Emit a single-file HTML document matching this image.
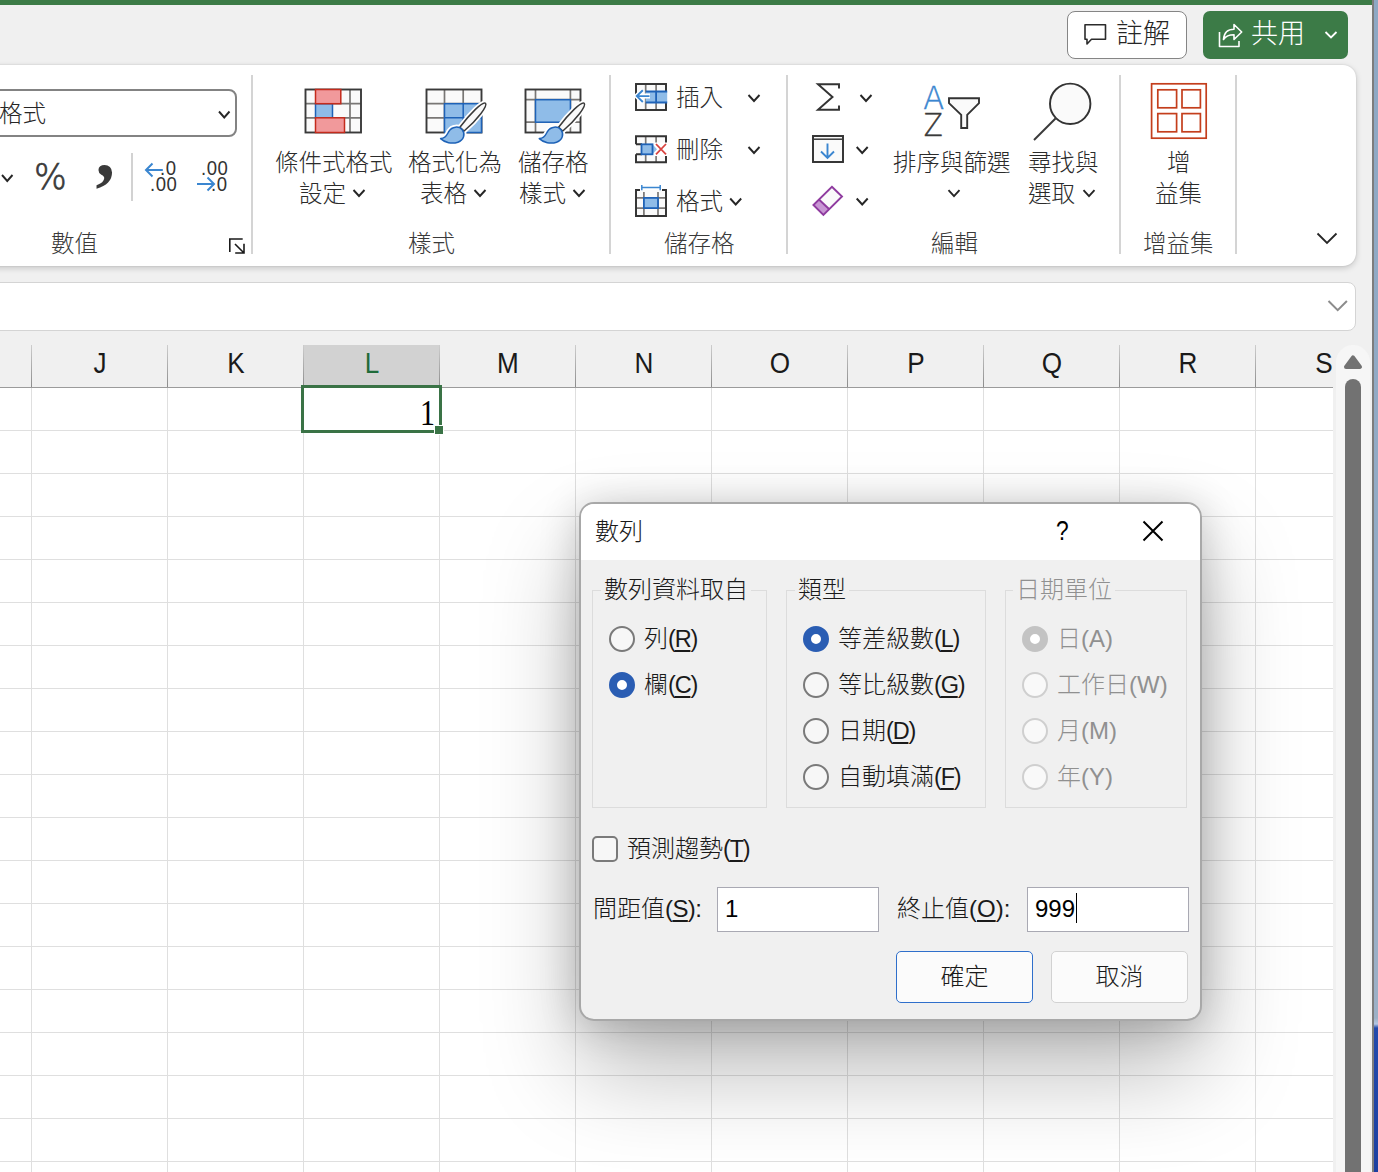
<!DOCTYPE html>
<html lang="zh-Hant">
<head>
<meta charset="utf-8">
<title>Excel</title>
<style>
*{box-sizing:border-box;margin:0;padding:0}
html,body{width:1378px;height:1172px;overflow:hidden;background:#f0f0f0}
body{position:relative;font-family:"Liberation Sans","Noto Sans CJK TC",sans-serif;color:#262626;font-size:24px;font-weight:300}
.abs{position:absolute}
.t{position:absolute;white-space:nowrap;line-height:1}
#greenbar{left:0;top:0;width:1373px;height:5px;background:#3c7b47}
#desk{left:1374px;top:0;width:4px;height:1172px;background:linear-gradient(to bottom,#8ea8c4 0,#93abc5 600px,#9cb0c6 1018px,#b4c6e2 1024px,#2249ab 1028px,#1c3fa0 1172px)}
#edge{left:1372px;top:0;width:2px;height:1172px;background:#7d7d7d}
#ribbon{left:-20px;top:65px;width:1376px;height:201px;background:#fff;border-radius:0 13px 13px 0;box-shadow:0 2px 6px rgba(0,0,0,.18),0 0 2px rgba(0,0,0,.12)}
.sep{position:absolute;top:75px;width:2px;height:179px;background:#d4d4d4}
#fbar{left:-20px;top:282px;width:1376px;height:49px;background:#fff;border:1px solid #d4d4d4;border-radius:0 8px 8px 0}
/* grid */
#grid{left:0;top:388px;width:1333px;height:784px;background:#fff}
#hl{left:0;top:388px;width:1333px;height:784px;background-image:repeating-linear-gradient(to bottom,transparent 0,transparent 42px,#dfdfdf 42px,#dfdfdf 43px)}
#vl{left:31px;top:388px;width:1302px;height:784px;background-image:repeating-linear-gradient(to right,#dfdfdf 0,#dfdfdf 1px,transparent 1px,transparent 136px)}
#hdrline{left:0;top:387px;width:1333px;height:1px;background:#9b9b9b}
.hs{position:absolute;top:345px;width:1px;height:42px;background:linear-gradient(to bottom,#cdcdcd,#8c8c8c)}
.hc{position:absolute;top:348.500px;width:136px;margin-left:1px;text-align:center;font-size:29px;line-height:28px;transform:scaleX(.9);color:#1a1a1a;font-weight:400}

/* top buttons */
#cmt{left:1067px;top:11px;width:120px;height:48px;background:#fff;border:1.500px solid #858585;border-radius:8px}
#shr{left:1203px;top:11px;width:145px;height:48px;background:#3c7b47;border-radius:7px}
.bt{font-size:27px;font-weight:300}
.gl{font-size:23.500px;color:#3a3a3a}
.rl{font-size:23.5px;color:#2b2b2b;text-align:center}
.chev{position:absolute}
/* number format select */
#nf{left:-20px;top:89px;width:257px;height:48px;border:2px solid #838383;border-radius:8px;background:#fff}

#selhdr{left:303px;top:345px;width:137px;height:41px;background:#d2d2d2}
#selcell{left:301px;top:385px;width:141px;height:48px;border:3px solid #3a7346;background:#fff}
#fillh{left:434px;top:425px;width:10px;height:10px;background:#3a7346;border:1px solid #fff}
#sbtrack{left:1336px;top:345px;width:34px;height:840px;background:#f6f6f6;border-radius:17px 17px 0 0}
#sbthumb{left:1345px;top:379px;width:16px;height:820px;background:#727272;border-radius:8px}

.ic{position:absolute;left:0;top:0;overflow:visible}
.sm{position:absolute;font-size:19.500px;line-height:1;color:#333;white-space:nowrap;transform-origin:0 0;transform:scaleX(.95);font-weight:400;letter-spacing:.6px}

/* dialog */
#dlg{left:579px;top:502px;width:623px;height:519px;background:#f0f0f0;border:2px solid #a8a8a8;border-radius:15px;box-shadow:0 50px 96px rgba(0,0,0,.27),0 4px 40px rgba(0,0,0,.2);overflow:hidden}
#dlgtitle{left:0;top:0;width:100%;height:56px;background:#fff}
.gb{position:absolute;border:1px solid #dcdcdc}
.gt{position:absolute;white-space:nowrap;line-height:1;font-size:24px;color:#1a1a1a;background:#f0f0f0;padding:0 3px}
.dl{position:absolute;white-space:nowrap;line-height:1;font-size:24px;color:#1a1a1a}
.dl u{text-decoration-thickness:1.500px;text-underline-offset:3px}
.dl i{font-style:normal;letter-spacing:-1.200px;font-size:23.500px}
.dis{color:#909090}
.dl.dis i{letter-spacing:0;font-size:24px}
.rad{position:absolute;width:26px;height:26px;border-radius:50%;border:2px solid #7a7a7a;background:#f7f7f7}
.rad.on{border:8px solid #2a5db3;background:#fff}
.rad.d{border-color:#cfcfcf;background:#f9f9f9}
.rad.d.on{border:8px solid #c3c3c3;background:#fff}
.inp{position:absolute;top:887px;width:162px;height:45px;background:#fff;border:1px solid #a9a9b3}
.btn{position:absolute;top:951px;width:137px;height:52px;background:#fbfbfb;border:1px solid #d2d2d2;border-radius:5px;text-align:center;font-size:24px;line-height:50px;color:#1a1a1a}
</style>
</head>
<body>
<div id="greenbar" class="abs"></div>
<div id="ribbon" class="abs"></div>

<!-- top right buttons -->
<div id="cmt" class="abs"></div>
<svg class="abs" style="left:1082px;top:21px" width="28" height="28" viewBox="0 0 28 28" fill="none" stroke="#2b2b2b" stroke-width="1.600" stroke-linejoin="round"><path d="M3 3.800h20.500v14.500h-14l-4.500 4.700v-4.700h-2z"/></svg>
<div class="t bt" style="left:1116px;top:20.500px;color:#262626">註解</div>
<div id="shr" class="abs"></div>
<svg class="abs" style="left:1217px;top:21px" width="30" height="28" viewBox="0 0 30 28" fill="none" stroke="#fff" stroke-width="1.6" stroke-linejoin="round" stroke-linecap="butt"><path d="M2.5 11v14.5h19.5V20"/><path d="M6.500 18.500c.5-6.500 4.500-10.200 10.500-10.200V3.500l7.700 7.500-7.700 7.500v-4.700c-4.500 0-8 1-10.500 4.700z"/></svg>
<div class="t bt" style="left:1251px;top:21px;color:#fff">共用</div>
<svg class="abs" style="left:1324px;top:30px" width="14" height="10" viewBox="0 0 14 10" fill="none" stroke="#fff" stroke-width="1.8"><path d="M1.500 2l5.500 5.500L12.500 2"/></svg>

<!-- separators -->
<div class="sep" style="left:251px"></div>
<div class="sep" style="left:609px"></div>
<div class="sep" style="left:786px"></div>
<div class="sep" style="left:1119px"></div>
<div class="sep" style="left:1235px"></div>

<!-- group labels -->
<div class="t gl" style="left:51px;top:233px">數值</div>
<div class="t gl" style="left:408px;top:233px">樣式</div>
<div class="t gl" style="left:664px;top:233px">儲存格</div>
<div class="t gl" style="left:931px;top:233px">編輯</div>
<div class="t gl" style="left:1143px;top:233px">增益集</div>

<!-- NUMBER GROUP -->
<div id="nf" class="abs"></div>
<div class="t" style="left:-1px;top:103px;font-size:23.500px;color:#262626">格式</div>
<div class="t" style="left:33.500px;top:159px;font-family:'DejaVu Sans','Liberation Sans',sans-serif;font-size:35.500px;color:#3a3a3a;font-weight:200;-webkit-text-stroke:.7px #3a3a3a;transform-origin:0 0;transform:scaleX(.97)">%</div>
<div class="t" style="left:95.500px;top:112.300px;font-family:'Liberation Serif',serif;font-weight:700;font-size:78px;color:#3a3a3a">,</div>
<div class="abs" style="left:131px;top:153px;width:2px;height:48px;background:#d2d2d2"></div>
<div class="sm" style="left:159.600px;top:158.500px">.0</div>
<div class="sm" style="left:149.500px;top:175px">.00</div>
<div class="sm" style="left:201.400px;top:158.500px">.00</div>
<div class="sm" style="left:211.300px;top:175px">.0</div>
<div class="t rl" style="left:275px;top:151.500px;width:117px">條件式格式</div>
<div class="t rl" style="left:299px;top:182.500px">設定</div>
<div class="t rl" style="left:408px;top:151.500px">格式化為</div>
<div class="t rl" style="left:420px;top:182.500px">表格</div>
<div class="t rl" style="left:518px;top:151.500px">儲存格</div>
<div class="t rl" style="left:519px;top:182.500px">樣式</div>
<div class="t rl" style="left:676px;top:86.500px">插入</div>
<div class="t rl" style="left:676px;top:138.500px">刪除</div>
<div class="t rl" style="left:676px;top:190.500px">格式</div>
<div class="t rl" style="left:893px;top:151.500px">排序與篩選</div>
<div class="t rl" style="left:1028px;top:151.500px">尋找與</div>
<div class="t rl" style="left:1028px;top:182.500px">選取</div>
<div class="t rl" style="left:1167px;top:151.500px">增</div>
<div class="t rl" style="left:1155px;top:182.500px">益集</div>
<svg class="ic" width="1378" height="280" viewBox="0 0 1378 280">
<path d="M219 111.5l5.25 6.0l5.25 -6.0" fill="none" stroke="#262626" stroke-width="1.9"/><path d="M2 175l5.25 6.0l5.25 -6.0" fill="none" stroke="#262626" stroke-width="1.9"/><path d="M353.5 190l5.5 6.0l5.5 -6.0" fill="none" stroke="#262626" stroke-width="1.9"/><path d="M474.5 190l5.5 6.0l5.5 -6.0" fill="none" stroke="#262626" stroke-width="1.9"/><path d="M573.5 190l5.5 6.0l5.5 -6.0" fill="none" stroke="#262626" stroke-width="1.9"/><path d="M748.5 95l5.5 6.0l5.5 -6.0" fill="none" stroke="#262626" stroke-width="1.9"/><path d="M748.5 147l5.5 6.0l5.5 -6.0" fill="none" stroke="#262626" stroke-width="1.9"/><path d="M730.2 198.5l5.5 6.0l5.5 -6.0" fill="none" stroke="#262626" stroke-width="1.9"/><path d="M860.5 95l5.5 6.0l5.5 -6.0" fill="none" stroke="#262626" stroke-width="1.9"/><path d="M856.7 147l5.5 6.0l5.5 -6.0" fill="none" stroke="#262626" stroke-width="1.9"/><path d="M856.7 198.5l5.5 6.0l5.5 -6.0" fill="none" stroke="#262626" stroke-width="1.9"/><path d="M948.5 190.2l5.5 6.0l5.5 -6.0" fill="none" stroke="#262626" stroke-width="1.9"/><path d="M1083.5 190.2l5.5 6.0l5.5 -6.0" fill="none" stroke="#262626" stroke-width="1.9"/><path d="M1317.500 233.500l9.500 9.500l9.500 -9.500" fill="none" stroke="#262626" stroke-width="1.8"/><g fill="none" stroke="#3b86d0" stroke-width="2"><path d="M162.800 170H146.500M152.500 163.500L146 170l6.500 6.500"/><path d="M197 184H213.500M207.500 177.500L214 184l-6.500 6.500"/></g><g fill="none" stroke="#1a1a1a" stroke-width="1.6"><path d="M229.800 252V239H242.700"/><path d="M235 244l9 9M244 243.800V253H235.200"/></g>
</svg>
<svg class="ic" width="1378" height="280" viewBox="0 0 1378 280">
<g>
<rect x="305.500" y="89.500" width="55.500" height="43" fill="#fafafa"/>
<path d="M350 89.500V132.500M305.500 103.700H361M305.500 117.800H361" stroke="#797775" stroke-width="1.700" fill="none"/>
<rect x="305.500" y="89.500" width="55.500" height="43" fill="none" stroke="#3a3a3a" stroke-width="1.900"/>
<rect x="315.500" y="103.700" width="17" height="14.100" fill="#8fbce8" stroke="#1e62b7" stroke-width="1.500"/>
<rect x="315.500" y="89.500" width="25.300" height="14.200" fill="#f1999b" stroke="#c42b1c" stroke-width="1.500"/>
<rect x="315.500" y="117.800" width="29" height="14.700" fill="#f1999b" stroke="#c42b1c" stroke-width="1.500"/>
</g>
<g>
<rect x="426.500" y="89.500" width="55" height="43" fill="#fafafa"/>
<path d="M444.500 89.500V132.500M463.200 89.500V132.500M426.500 103.700H481.500M426.500 117.800H481.500" stroke="#797775" stroke-width="1.700" fill="none"/>
<rect x="426.500" y="89.500" width="55" height="43" fill="none" stroke="#3a3a3a" stroke-width="1.900"/>
<rect x="444.500" y="103.700" width="37" height="28.800" fill="#8fbce8" stroke="#1e62b7" stroke-width="1.500"/>
<path d="M463.200 103.700V132.500M444.500 117.800H481.500" stroke="#1e62b7" stroke-width="1.500" fill="none"/>
<g transform="translate(0.30000000000001137 0.0)">
<path d="M485.200 103.300C487.500 105.800 477.500 119.500 463.800 131L459.600 127.200C469.500 114 482.600 100.800 485.200 103.300Z" fill="none" stroke="#fff" stroke-width="5" stroke-linejoin="round"/>
<path d="M440.300 138.600C445.500 138.800 446.800 134.500 448.600 131.300C451.600 126.200 458.800 125.800 462 129.800C465.200 134 463.600 140.200 457.600 142.200C451.500 144.200 444.500 142.600 440.300 138.600Z" fill="none" stroke="#fff" stroke-width="5" stroke-linejoin="round"/>
<path d="M485.200 103.300C487.500 105.800 477.500 119.500 463.800 131L459.600 127.200C469.500 114 482.600 100.800 485.200 103.300Z" fill="#fafafa" stroke="#3a3a3a" stroke-width="1.500" stroke-linejoin="round"/>
<path d="M440.300 138.600C445.500 138.800 446.800 134.500 448.600 131.300C451.600 126.200 458.800 125.800 462 129.800C465.200 134 463.600 140.200 457.600 142.200C451.500 144.200 444.500 142.600 440.300 138.600Z" fill="#8fbce8" stroke="#1e62b7" stroke-width="1.500" stroke-linejoin="round"/>
</g>
</g>
<g>
<rect x="525.500" y="89.500" width="55" height="43" fill="#fafafa"/>
<path d="M535.500 89.500V132.500M570.400 89.500V132.500M525.500 99.700H580.500M525.500 122.200H580.500" stroke="#797775" stroke-width="1.700" fill="none"/>
<rect x="525.500" y="89.500" width="55" height="43" fill="none" stroke="#3a3a3a" stroke-width="1.900"/>
<rect x="535.500" y="99.700" width="34.900" height="22.500" fill="#8fbce8" stroke="#1e62b7" stroke-width="1.500"/>
<g transform="translate(99 0.0)">
<path d="M485.200 103.300C487.500 105.800 477.500 119.500 463.800 131L459.600 127.200C469.500 114 482.600 100.800 485.200 103.300Z" fill="none" stroke="#fff" stroke-width="5" stroke-linejoin="round"/>
<path d="M440.300 138.600C445.500 138.800 446.800 134.500 448.600 131.300C451.600 126.200 458.800 125.800 462 129.800C465.200 134 463.600 140.200 457.600 142.200C451.500 144.200 444.500 142.600 440.300 138.600Z" fill="none" stroke="#fff" stroke-width="5" stroke-linejoin="round"/>
<path d="M485.200 103.300C487.500 105.800 477.500 119.500 463.800 131L459.600 127.200C469.500 114 482.600 100.800 485.200 103.300Z" fill="#fafafa" stroke="#3a3a3a" stroke-width="1.500" stroke-linejoin="round"/>
<path d="M440.300 138.600C445.500 138.800 446.800 134.500 448.600 131.300C451.600 126.200 458.800 125.800 462 129.800C465.200 134 463.600 140.200 457.600 142.200C451.500 144.200 444.500 142.600 440.300 138.600Z" fill="#8fbce8" stroke="#1e62b7" stroke-width="1.500" stroke-linejoin="round"/>
</g>
</g>
<g>
<rect x="636" y="84" width="30" height="26" fill="#fafafa"/>
<path d="M645.700 84V110M656.100 84V110" stroke="#797775" stroke-width="1.700" fill="none"/>
<rect x="636" y="84" width="30" height="26" fill="none" stroke="#333" stroke-width="1.950"/>
<rect x="645.700" y="91.500" width="21.500" height="11" fill="#8fbce8"/>
<path d="M645.700 91.500H667.200M645.700 102.500H667.200M656.100 91.500V102.500" stroke="#1e62b7" stroke-width="1.800" fill="none"/>
<path d="M650 96.100H637.500M642.800 90.200L636.800 96.100l6 5.900" stroke="#fff" stroke-width="5" fill="none"/>
<path d="M649.500 96.100H637.200M642.800 90.200L636.800 96.100l6 5.900" stroke="#3b86d0" stroke-width="1.900" fill="none"/>
</g>
<g>
<rect x="636" y="136.200" width="30" height="26" fill="#fafafa"/>
<path d="M645.700 136.200V162.200M656.100 136.200V162.200" stroke="#797775" stroke-width="1.700" fill="none"/>
<path d="M636 144.300V136.200H666V144M666 154.400V162.200H636V154.300M636 144.300H642M636 154.300H642" fill="none" stroke="#333" stroke-width="1.950"/>
<rect x="652" y="142.500" width="16" height="13.500" fill="#fff"/>
<path d="M652.500 144.300L657 149.300L652.500 154.300Z" fill="#8fbce8"/>
<rect x="641.500" y="144.300" width="11" height="10" fill="#8fbce8" stroke="#1e62b7" stroke-width="1.800"/>
<path d="M656 144L666 154.400M666 144L656 154.400" stroke="#d9433f" stroke-width="1.800" fill="none"/>
</g>
<g>
<rect x="636" y="190" width="30" height="26" fill="#fafafa"/>
<path d="M643.900 192V216M658 192V216M636 197.900H666M636 208.100H666" stroke="#797775" stroke-width="1.700" fill="none"/>
<path d="M640 190H636V216H666V190H662" fill="none" stroke="#333" stroke-width="1.950"/>
<rect x="643.900" y="197.900" width="14.100" height="10.200" fill="#8fbce8" stroke="#1e62b7" stroke-width="1.800"/>
<path d="M641.800 185V190.200M660.200 185V190.200M641.800 187.600H660.200" stroke="#3b86d0" stroke-width="1.500" fill="none"/>
</g>
<path d="M839 88.500V84.200H818L832.500 97L818 109.800H839V105.500" fill="none" stroke="#333" stroke-width="1.950"/>
<g>
<rect x="813" y="136" width="30" height="26" fill="#fafafa" stroke="#333" stroke-width="1.950"/>
<path d="M813 139.200H843" stroke="#3a3a3a" stroke-width="1.500"/>
<path d="M827.500 143.500V157.500M821 151.500L827.500 158l6.500 -6.500" fill="none" stroke="#3b86d0" stroke-width="1.900"/>
</g>
<g stroke-linejoin="miter">
<path d="M831.900 186.800L842 196.500L823.400 215L813.400 205Z" fill="#fafafa"/>
<path d="M818.700 199.200L829.300 209.200L823.400 215L813.400 205Z" fill="#c896d4"/>
<path d="M831.900 186.800L842 196.500L823.400 215L813.400 205Z" fill="none" stroke="#8f3b9f" stroke-width="1.900"/>
<path d="M818.700 199.200L829.300 209.200" stroke="#8f3b9f" stroke-width="1.900"/>
</g>
<text x="923.300" y="109" font-family="DejaVu Sans, Liberation Sans, sans-serif" font-weight="200" font-size="31.600" fill="#3b86d0" stroke="#3b86d0" stroke-width=".5" textLength="21" lengthAdjust="spacingAndGlyphs">A</text>
<text x="923.800" y="136.400" font-family="DejaVu Sans, Liberation Sans, sans-serif" font-weight="200" font-size="31.600" fill="#3a3a3a" stroke="#3a3a3a" stroke-width=".5" textLength="19" lengthAdjust="spacingAndGlyphs">Z</text>
<path d="M949 98.200H979V103.200L967.200 114.800V128H961.200V114.800L949 103.200Z" fill="#fafafa" stroke="#333" stroke-width="1.900" stroke-linejoin="miter"/>
<circle cx="1070.200" cy="103.800" r="20.200" fill="#fafafa" stroke="#333" stroke-width="1.950"/>
<path d="M1055.500 118.500L1034 140" stroke="#3a3a3a" stroke-width="1.900" fill="none"/>
<g fill="none" stroke="#c43e1c" stroke-width="1.700">
<rect x="1151.600" y="83.800" width="54.600" height="54.400"/>
<rect x="1157.800" y="89.800" width="18.800" height="18"/>
<rect x="1182" y="89.800" width="18.400" height="18"/>
<rect x="1157.800" y="113.600" width="18.800" height="18.200"/>
<rect x="1182" y="113.600" width="18.400" height="18.200"/>
</g>
</svg>
<div id="fbar" class="abs"></div>
<svg class="abs" style="left:1326px;top:298px" width="24" height="16" viewBox="0 0 24 16"><path d="M2.500 3l9.200 9.200L20.900 3" fill="none" stroke="#8c8c8c" stroke-width="2"/></svg>
<div id="grid" class="abs"></div>
<div id="hl" class="abs"></div>
<div id="vl" class="abs"></div>
<div id="hdrline" class="abs"></div>
<!-- headers -->
<div id="selhdr" class="abs"></div>
<div class="hs" style="left:31px"></div><div class="hc" style="left:31px">J</div>
<div class="hs" style="left:167px"></div><div class="hc" style="left:167px">K</div>
<div class="hs" style="left:303px"></div><div class="hc" style="left:303px;color:#1f6b3a">L</div>
<div class="hs" style="left:439px"></div><div class="hc" style="left:439px">M</div>
<div class="hs" style="left:575px"></div><div class="hc" style="left:575px">N</div>
<div class="hs" style="left:711px"></div><div class="hc" style="left:711px">O</div>
<div class="hs" style="left:847px"></div><div class="hc" style="left:847px">P</div>
<div class="hs" style="left:983px"></div><div class="hc" style="left:983px">Q</div>
<div class="hs" style="left:1119px"></div><div class="hc" style="left:1119px">R</div>
<div class="hs" style="left:1255px"></div><div class="hc" style="left:1255px">S</div>
<div id="selcell" class="abs"></div>
<div class="t" style="left:380.800px;top:396.800px;width:54px;text-align:right;font-family:'Liberation Serif','Noto Serif CJK SC',serif;font-size:36.500px;font-weight:400;color:#000;line-height:32px;transform:scaleX(.82);transform-origin:100% 50%">1</div>
<div id="fillh" class="abs"></div>
<div id="sbtrack" class="abs"></div>
<svg class="abs" style="left:1343px;top:354px" width="20" height="16" viewBox="0 0 20 16"><path d="M10 3.300L17 13H3z" fill="#727272" stroke="#727272" stroke-width="4" stroke-linejoin="round"/></svg>
<div id="sbthumb" class="abs"></div>

<!-- DIALOG -->
<div id="dlg" class="abs"><div id="dlgtitle" class="abs"></div></div>
<div class="dl" style="left:595px;top:520px">數列</div>
<div class="dl" style="left:1055.500px;top:516px;font-size:28.500px;font-weight:400;color:#000;transform:scaleX(.8);transform-origin:0 0">?</div>
<svg class="abs" style="left:1141px;top:519px" width="24" height="24" viewBox="0 0 24 24"><path d="M2.500 2.500L21.500 21.500M21.500 2.500L2.500 21.500" stroke="#000" stroke-width="2" fill="none"/></svg>

<div class="gb" style="left:592px;top:590px;width:175px;height:218px"></div>
<div class="gb" style="left:786px;top:590px;width:200px;height:218px"></div>
<div class="gb" style="left:1005px;top:590px;width:182px;height:218px"></div>
<div class="gt" style="left:601px;top:578px">數列資料取自</div>
<div class="gt" style="left:795px;top:578px">類型</div>
<div class="gt dis" style="left:1013px;top:578px">日期單位</div>

<div class="rad" style="left:609px;top:626px"></div>
<div class="rad on" style="left:609px;top:672px"></div>
<div class="dl" style="left:644px;top:627px">列<i>(<u>R</u>)</i></div>
<div class="dl" style="left:644px;top:673px">欄<i>(<u>C</u>)</i></div>

<div class="rad on" style="left:803px;top:626px"></div>
<div class="rad" style="left:803px;top:672px"></div>
<div class="rad" style="left:803px;top:718px"></div>
<div class="rad" style="left:803px;top:764px"></div>
<div class="dl" style="left:838px;top:627px">等差級數<i>(<u>L</u>)</i></div>
<div class="dl" style="left:838px;top:673px">等比級數<i>(<u>G</u>)</i></div>
<div class="dl" style="left:838px;top:719px">日期<i>(<u>D</u>)</i></div>
<div class="dl" style="left:838px;top:765px">自動填滿<i>(<u>F</u>)</i></div>

<div class="rad d on" style="left:1022px;top:626px"></div>
<div class="rad d" style="left:1022px;top:672px"></div>
<div class="rad d" style="left:1022px;top:718px"></div>
<div class="rad d" style="left:1022px;top:764px"></div>
<div class="dl dis" style="left:1057px;top:627px">日<i>(A)</i></div>
<div class="dl dis" style="left:1057px;top:673px">工作日<i>(W)</i></div>
<div class="dl dis" style="left:1057px;top:719px">月<i>(M)</i></div>
<div class="dl dis" style="left:1057px;top:765px">年<i>(Y)</i></div>

<div class="abs" style="left:592px;top:836px;width:26px;height:26px;border:2px solid #7a7a7a;border-radius:5px;background:#f7f7f7"></div>
<div class="dl" style="left:627px;top:837px">預測趨勢<i>(<u>T</u>)</i></div>

<div class="dl" style="left:593px;top:897px">間距值<i style="letter-spacing:-.600px;font-size:24px">(<u>S</u>)</i>:</div>
<div class="inp" style="left:717px"></div>
<div class="dl" style="left:725px;top:897px;font-weight:400;color:#000">1</div>
<div class="dl" style="left:897px;top:897px">終止值<i style="letter-spacing:0;font-size:24px">(<u>O</u>)</i>:</div>
<div class="inp" style="left:1027px"></div>
<div class="dl" style="left:1035px;top:897px;font-weight:400;color:#000">999</div>
<div class="abs" style="left:1076px;top:893px;width:1px;height:30px;background:#000"></div>

<div class="btn" style="left:896px;border-color:#2f6fcb">確定</div>
<div class="btn" style="left:1051px">取消</div>
<div id="edge" class="abs"></div>
<div id="desk" class="abs"></div>
</body>
</html>
